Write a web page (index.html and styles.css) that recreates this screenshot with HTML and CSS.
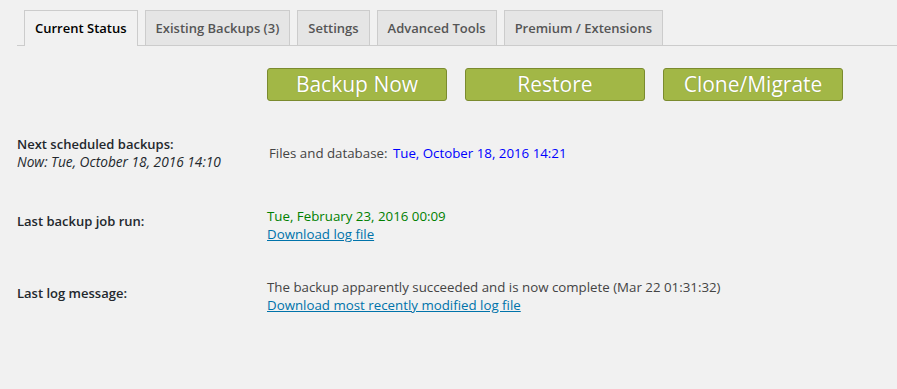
FILE: index.html
```html
<!DOCTYPE html>
<html lang="en">
<head>
    <meta charset="UTF-8">
    <meta name="viewport" content="width=device-width, initial-scale=1.0">
    <title>Backup Status</title>
    <link rel="stylesheet" href="styles.css">
</head>
<body>
  <div class="wrap">
    <div class="nav-tabs">
        <a class="nav-tab active" href="#">Current Status</a>
        <a class="nav-tab" href="#">Existing Backups (3)</a>
        <a class="nav-tab" href="#">Settings</a>
        <a class="nav-tab" href="#">Advanced Tools</a>
        <a class="nav-tab" href="#">Premium / Extensions</a>
    </div>

    <div class="actions">
        <button class="big-button">Backup Now</button>
        <button class="big-button">Restore</button>
        <button class="big-button">Clone/Migrate</button>
    </div>

    <div class="status">
        <div class="row row-first">
            <div class="label">
                Next scheduled backups:
                <div class="now">Now: Tue, October 18, 2016 14:10</div>
            </div>
            <div class="value value-first">
                Files and database: <span class="scheduled">Tue, October 18, 2016 14:21</span>
            </div>
        </div>

        <div class="row row-run">
            <div class="label">Last backup job run:</div>
            <div class="value">
                <div class="last-run">Tue, February 23, 2016 00:09</div>
                <a href="#">Download log file</a>
            </div>
        </div>

        <div class="row">
            <div class="label">Last log message:</div>
            <div class="value">
                <div>The backup apparently succeeded and is now complete (Mar 22 01:31:32)</div>
                <a href="#">Download most recently modified log file</a>
            </div>
        </div>
    </div>
  </div>
</body>
</html>
```

FILE: styles.css
```css
body {
    margin: 0;
    background-color: #f1f1f1;
    font-family: "Open Sans", sans-serif;
    font-size: 13px;
    color: #444;
}
.wrap {
    padding-left: 17px;
}
.nav-tabs {
    display: flex;
    align-items: flex-end;
    padding-top: 10px;
    border-bottom: 1px solid #ccc;
}
.nav-tab {
    margin-left: 7px;
    padding: 5px 10px;
    border: 1px solid #ccc;
    border-bottom: none;
    background-color: #e5e5e5;
    color: #555;
    font-size: 13px;
    font-weight: 600;
    line-height: 24px;
    text-decoration: none;
}
.nav-tab.active {
    background-color: #f1f1f1;
    color: #000;
    padding-bottom: 6px;
    margin-bottom: -1px;
}
.actions {
    display: flex;
    gap: 18px;
    margin: 22px 0 0 250px;
}
.big-button {
    width: 180px;
    height: 33px;
    padding: 0;
    background-color: #a2b746;
    border: 1px solid #7b8b2f;
    border-radius: 3px;
    color: white;
    font-family: "Open Sans", sans-serif;
    font-size: 21px;
    line-height: 31px;
    text-shadow: 0 0 1px rgba(0, 0, 0, 0.25);
    cursor: pointer;
}
.status {
    margin-top: 35px;
}
.row {
    display: flex;
    align-items: flex-start;
    margin-bottom: 35px;
    line-height: 18px;
}
.row-first {
    margin-bottom: 37px;
}
.label {
    width: 250px;
    padding-top: 6px;
    color: #23282d;
    font-weight: 600;
}
.row-first .label {
    padding-top: 0;
    line-height: 17px;
}
.row-run .label {
    padding-top: 5px;
}
.now {
    font-size: 13.7px;
    font-style: italic;
    font-weight: normal;
}
.value {
    font-size: 13.3px;
}
.value-first {
    padding: 8px 0 0 2px;
}
.scheduled {
    color: #0000ff;
    margin-left: 2px;
}
.last-run {
    color: #008000;
}
.value a {
    color: #0073aa;
}
```
